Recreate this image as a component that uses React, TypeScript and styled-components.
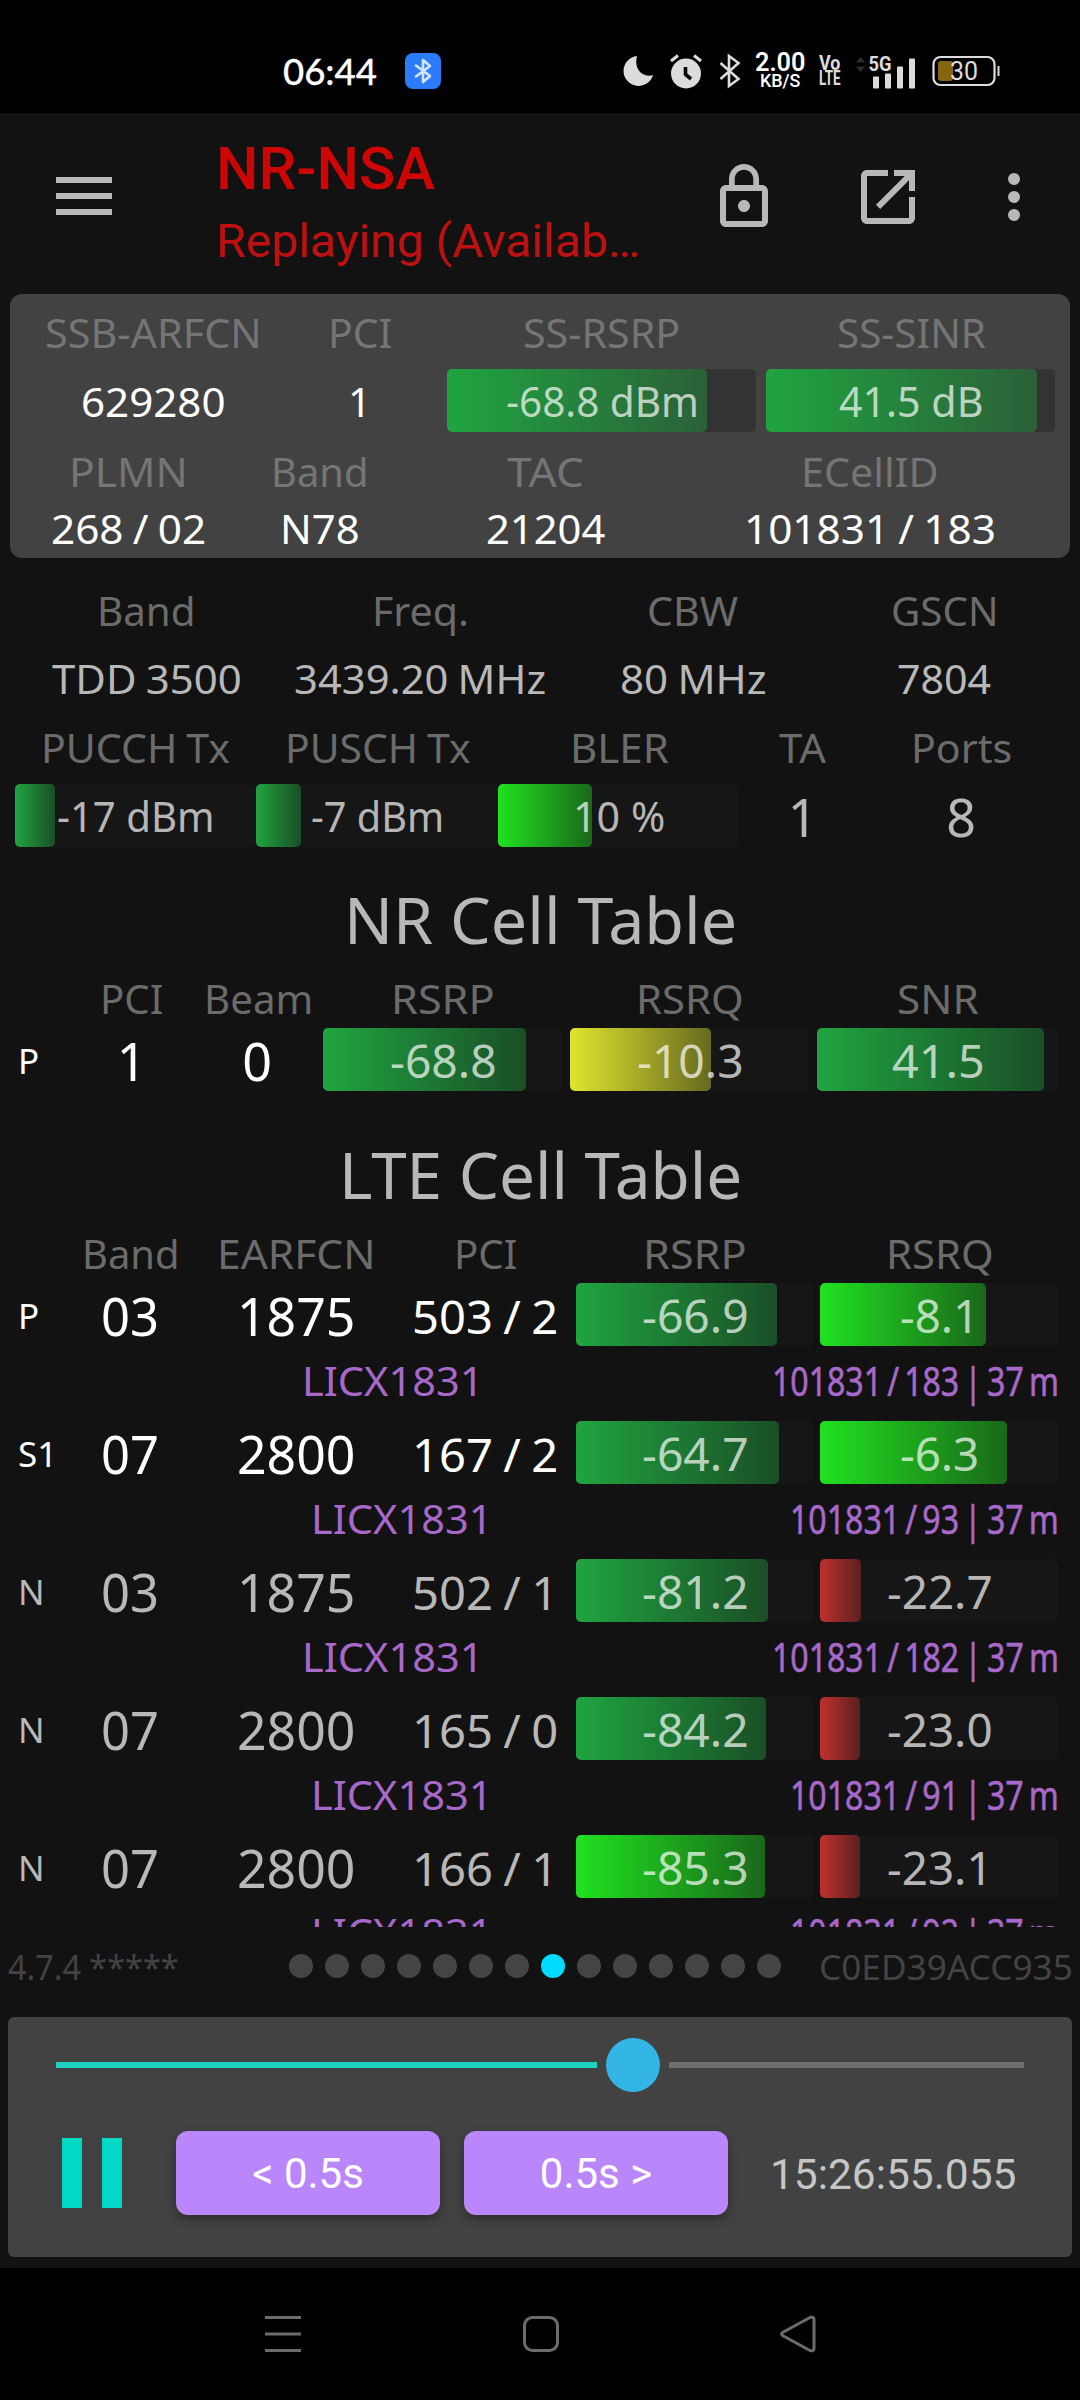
import React, { useLayoutEffect, useRef, useState } from "react";
import styled, { createGlobalStyle } from "styled-components";

const Global = createGlobalStyle`
  * { box-sizing: border-box; }
  body { margin: 0; background: #000; }
`;

const sans = `"Noto Sans", "Open Sans", sans-serif`;
const roboto = `Roboto, "Noto Sans", sans-serif`;
const dim = "rgba(255, 255, 255, 0.7)";
const bright = "#ffffff";

/* ---------- text that fills a given width ---------- */

const FitBox = styled.span<{ $w: number }>`
  display: inline-block;
  flex: none;
  width: ${(p) => p.$w}px;
  padding-left: 1.5px;
  text-align: left;
  white-space: pre;
`;
const FitInner = styled.span`
  display: inline-block;
  transform-origin: 0 50%;
`;

function Fit({ w, children }: { w: number; children: string }) {
  const ref = useRef<HTMLSpanElement>(null);
  const [scale, setScale] = useState(1);
  useLayoutEffect(() => {
    if (ref.current) setScale((w - 2.5) / ref.current.offsetWidth);
  }, [w, children]);
  return (
    <FitBox $w={w}>
      <FitInner ref={ref} style={{ transform: `scaleX(${scale})` }}>
        {children}
      </FitInner>
    </FitBox>
  );
}

/* ---------- layout ---------- */

const Screen = styled.div`
  width: 1080px;
  height: 2400px;
  display: flex;
  flex-direction: column;
  background: #121212;
  font-family: ${sans};
  overflow: hidden;
`;

const StatusBar = styled.div`
  height: 113px;
  flex: none;
  background: #000;
  padding: 28px 80px 0 281px;
  display: flex;
  align-items: center;
  color: #fff;
`;
const Clock = styled.div`
  font: 500 37.5px/44px Lato, sans-serif;
  -webkit-text-stroke: 0.3px #fff;
  margin-right: 28px;
`;
const BtBadge = styled.div`
  width: 36px;
  height: 36px;
  border-radius: 8px;
  background: #2c7bfa;
  display: flex;
  align-items: center;
  justify-content: center;
`;
const StatusIcons = styled.div`
  margin-left: auto;
  display: flex;
  align-items: center;
  height: 44px;
`;
const Stack = styled.div<{ $ml: number }>`
  margin-left: ${(p) => p.$ml}px;
  display: flex;
  flex-direction: column;
  align-items: center;
`;
const SpeedNum = styled.div`
  font: 600 25px/20px Roboto, sans-serif;
`;
const SpeedUnit = styled.div`
  font: 500 19px/16px Roboto, sans-serif;
`;
const VoText = styled.div`
  font: 700 20px/15px Roboto, sans-serif;
  color: #dcdcdc;
`;
const StatusSvg = styled.svg<{ $ml?: number }>`
  display: block;
  flex: none;
  margin-left: ${(p) => p.$ml ?? 0}px;
`;

const AppBar = styled.header`
  height: 181px;
  flex: none;
  display: flex;
  align-items: flex-start;
  padding-left: 56px;
`;
const Burger = styled.div`
  width: 56px;
  height: 38px;
  margin-top: 64px;
  display: flex;
  flex-direction: column;
  justify-content: space-between;
`;
const BurgerLine = styled.div`
  height: 6px;
  background: #b8b8b8;
`;
const Titles = styled.div`
  width: 430px;
  margin-left: 102px;
  padding-top: 23px;
  font-family: ${roboto};
  white-space: nowrap;
`;
const Title = styled.div`
  font-size: 60px;
  line-height: 66px;
  font-weight: 500;
  color: #cd0505;
`;
const Subtitle = styled.div`
  font-size: 46px;
  line-height: 60px;
  margin-top: 9px;
  color: #bd1010;
`;
const AppIcon = styled.svg<{ $ml: number }>`
  display: block;
  width: 72px;
  height: 72px;
  margin-top: 48px;
  margin-left: ${(p) => p.$ml}px;
  fill: #b8b8b8;
`;

const Body = styled.main`
  height: 1633px;
  flex: none;
  overflow: hidden;
`;
const Card = styled.section`
  margin: 0 10px 16px;
  height: 264px;
  border-radius: 12px;
  background: #424242;
`;
const Row = styled.div<{ $h: number; $pl?: number }>`
  height: ${(p) => p.$h}px;
  padding-left: ${(p) => p.$pl ?? 0}px;
  display: flex;
  align-items: center;
`;
const Cell = styled.div<{ $w: number; $ml?: number; $size?: number; $color?: string }>`
  width: ${(p) => p.$w}px;
  flex: none;
  margin-left: ${(p) => p.$ml ?? 0}px;
  padding-top: 2px;
  font-size: ${(p) => p.$size ?? 40.5}px;
  line-height: 48px;
  color: ${(p) => p.$color ?? dim};
  word-spacing: -0.04em;
  display: flex;
  justify-content: center;
  white-space: pre;
`;
const Tag = styled.div<{ $color: string }>`
  width: 70px;
  flex: none;
  padding: 2px 0 0 18px;
  font-size: 35px;
  line-height: 48px;
  color: ${(p) => p.$color};
`;
const Meter = styled.div<{ $w: number; $ml?: number; $size: number; $track: string }>`
  position: relative;
  width: ${(p) => p.$w}px;
  height: 63px;
  flex: none;
  margin-left: ${(p) => p.$ml ?? 0}px;
  border-radius: 5px;
  background: ${(p) => p.$track};
  font-size: ${(p) => p.$size}px;
  line-height: 64px;
  color: ${dim};
  display: flex;
  justify-content: center;
`;
const Fill = styled.div<{ $rgb: string }>`
  position: absolute;
  left: 0;
  top: 0;
  bottom: 0;
  border-radius: 5px;
  background: linear-gradient(90deg, rgb(${(p) => p.$rgb}), rgba(${(p) => p.$rgb}, 0.4));
`;
const MeterText = styled.div`
  position: relative;
`;
const SectionTitle = styled.h2<{ $mt: number }>`
  margin: ${(p) => p.$mt}px 0 0;
  height: 96px;
  line-height: 96px;
  font-size: 64.5px;
  font-weight: 400;
  color: #b8b8b8;
  display: flex;
  justify-content: center;
`;
const SiteRow = styled.div`
  height: 75px;
  padding: 0 21px 6px 14px;
  display: flex;
  align-items: center;
  font-size: 40.5px;
  line-height: 69px;
  color: #a769c9;
`;
const SiteName = styled.div`
  flex: 1;
  text-align: center;
`;
const SiteId = styled.div`
  word-spacing: -0.1em;
  -webkit-text-stroke: 0.6px #a769c9;
`;

const PagerRow = styled.div`
  height: 80px;
  flex: none;
  padding: 0 7px 0 6px;
  display: flex;
  align-items: center;
  justify-content: space-between;
  font-size: 34px;
  line-height: 80px;
  color: #434343;
`;
const Dots = styled.div`
  display: flex;
  gap: 12px;
  margin-left: 110px;
  margin-right: auto;
  padding-bottom: 2px;
`;
const Dot = styled.div<{ $on: boolean }>`
  width: 24px;
  height: 24px;
  border-radius: 50%;
  background: ${(p) => (p.$on ? "#00dcff" : "#444444")};
`;

const Player = styled.section`
  margin: 10px 8px 11px;
  height: 240px;
  flex: none;
  border-radius: 6px;
  background: #424242;
  padding: 21px 48px 0;
`;
const Slider = styled.div`
  display: flex;
  align-items: center;
  gap: 9px;
  height: 54px;
`;
const Track = styled.div<{ $on?: boolean }>`
  height: 6px;
  ${(p) => (p.$on ? "width: 541px; background: #1ed2c0;" : "flex: 1; background: #6e6e6e;")}
`;
const Thumb = styled.div`
  width: 54px;
  height: 54px;
  border-radius: 50%;
  background: #33b5e5;
`;
const Controls = styled.div`
  margin-top: 39px;
  height: 84px;
  display: flex;
  align-items: center;
  font-family: ${roboto};
`;
const Pause = styled.div`
  margin: 0 54px 0 6px;
  width: 60px;
  height: 70px;
  border: solid #03dac5;
  border-width: 0 20px;
`;
const StepButton = styled.button`
  width: 264px;
  height: 84px;
  padding: 2px 0 0;
  margin: 0 24px 0 0;
  border: 0;
  border-radius: 12px;
  background: #b986fb;
  box-shadow: 0 4px 9px rgba(0, 0, 0, 0.35);
  color: #fff;
  font: 400 42px/82px ${roboto};
`;
const Time = styled.div`
  margin-left: 16px;
  padding-top: 2px;
  font-size: 42px;
  color: #c6c6c6;
`;

const NavBar = styled.nav`
  flex: 1;
  background: #000;
  display: flex;
  align-items: flex-start;
  padding: 46px 0 0 263px;
  gap: 218px;
`;
const NavIcon = styled.svg`
  display: block;
  width: 40px;
  height: 40px;
  fill: none;
  stroke: #6c6c6c;
  stroke-width: 3;
`;

/* ---------- data ---------- */

const GREEN = "32, 164, 64";
const LIME = "32, 226, 32";
const YELLOW = "224, 230, 46";
const RED = "192, 48, 46";

const LABEL_CARD = "#757575";
const LABEL = "#6b6b6b";

type MeterProps = {
  w: number;
  ml?: number;
  fill: number;
  rgb: string;
  text: string;
  tw: number;
  size?: number;
  track?: string;
};

function Bar({ w, ml, fill, rgb, text, tw, size = 46, track = "#161616" }: MeterProps) {
  return (
    <Meter $w={w} $ml={ml} $size={size} $track={track}>
      <Fill $rgb={rgb} style={{ width: fill }} />
      <MeterText>
        <Fit w={tw}>{text}</Fit>
      </MeterText>
    </Meter>
  );
}

type Col = [width: number, text: string, textWidth: number, marginLeft?: number];

function Cols({ h, pl, color, size, cols }: { h: number; pl?: number; color: string; size?: number; cols: Col[] }) {
  return (
    <Row $h={h} $pl={pl}>
      {cols.map(([w, text, tw, ml], i) => (
        <Cell key={i} $w={w} $ml={ml} $size={size} $color={color}>
          <Fit w={tw}>{text}</Fit>
        </Cell>
      ))}
    </Row>
  );
}

type Lte = {
  tag: string;
  band: string;
  earfcn: string;
  pci: string;
  rsrp: string;
  rsrpFill: number;
  rsrpRgb: string;
  rsrq: string;
  rsrqW: number;
  rsrqFill: number;
  rsrqRgb: string;
  cell: string;
  cellW: number;
};

const lteRows: Lte[] = [
  { tag: "P", band: "03", earfcn: "1875", pci: "503 / 2", rsrp: "-66.9", rsrpFill: 201, rsrpRgb: GREEN, rsrq: "-8.1", rsrqW: 82, rsrqFill: 166, rsrqRgb: LIME, cell: "101831 / 183 | 37 m", cellW: 289 },
  { tag: "S1", band: "07", earfcn: "2800", pci: "167 / 2", rsrp: "-64.7", rsrpFill: 203, rsrpRgb: GREEN, rsrq: "-6.3", rsrqW: 82, rsrqFill: 187, rsrqRgb: LIME, cell: "101831 / 93 | 37 m", cellW: 271 },
  { tag: "N", band: "03", earfcn: "1875", pci: "502 / 1", rsrp: "-81.2", rsrpFill: 192, rsrpRgb: GREEN, rsrq: "-22.7", rsrqW: 108, rsrqFill: 41, rsrqRgb: RED, cell: "101831 / 182 | 37 m", cellW: 289 },
  { tag: "N", band: "07", earfcn: "2800", pci: "165 / 0", rsrp: "-84.2", rsrpFill: 190, rsrpRgb: GREEN, rsrq: "-23.0", rsrqW: 108, rsrqFill: 40, rsrqRgb: RED, cell: "101831 / 91 | 37 m", cellW: 271 },
  { tag: "N", band: "07", earfcn: "2800", pci: "166 / 1", rsrp: "-85.3", rsrpFill: 189, rsrpRgb: LIME, rsrq: "-23.1", rsrqW: 108, rsrqFill: 40, rsrqRgb: RED, cell: "101831 / 92 | 37 m", cellW: 271 },
];

/* ---------- status bar ---------- */

function Status() {
  return (
    <StatusBar>
      <Clock>
        <Fit w={96}>06:44</Fit>
      </Clock>
      <BtBadge>
        <StatusSvg width="18" height="26" viewBox="0 0 18 26" fill="none" stroke="#d5e5ff" strokeWidth="2.6" strokeLinejoin="round" strokeLinecap="round">
          <path d="M2 7.5 16 18 9 24V2l7 6L2 18.5" />
        </StatusSvg>
      </BtBadge>
      <StatusIcons>
        <StatusSvg width="32" height="32" viewBox="0 0 32 32" fill="#dcdcdc">
          <path d="M15 1A15 15 0 1 0 31 20C23 23 11 16 15 1Z" />
        </StatusSvg>
        <StatusSvg $ml={15} width="34" height="36" viewBox="0 0 34 36">
          <circle cx="17" cy="20.500" r="15" fill="#dcdcdc" />
          <path d="M2 8 9 2.500M32 8 25 2.500" stroke="#dcdcdc" strokeWidth="3" />
          <path d="M16.500 14v7.500l5.500 4.500" fill="none" stroke="#000" strokeWidth="3.600" />
        </StatusSvg>
        <StatusSvg $ml={16} width="22" height="36" viewBox="0 0 22 36" fill="none" stroke="#dcdcdc" strokeWidth="2.600">
          <path d="M1.500 10 19.500 26 10 33V3l9.500 7L1.500 26" />
        </StatusSvg>
        <Stack $ml={12}>
          <SpeedNum>
            <Fit w={53}>2.00</Fit>
          </SpeedNum>
          <SpeedUnit>
            <Fit w={43}>KB/S</Fit>
          </SpeedUnit>
        </Stack>
        <Stack $ml={11}>
          <VoText>
            <Fit w={24}>Vo</Fit>
          </VoText>
          <VoText>
            <Fit w={24}>LTE</Fit>
          </VoText>
        </Stack>
        <StatusSvg $ml={15} width="60" height="36" viewBox="0 0 60 36" fill="#dcdcdc">
          <path d="M0 9.500 4.500 4 9 9.500ZM0 13.500 4.500 19 9 13.500Z" fill="#2e2e2e" />
          <text x="12.500" y="18" fontFamily="Roboto" fontWeight="700" fontSize="20" textLength="23" lengthAdjust="spacingAndGlyphs">
            5G
          </text>
          <rect x="17" y="23.500" width="6" height="12" rx="1" />
          <rect x="29" y="20.500" width="6" height="15" rx="1" />
          <rect x="41" y="13.500" width="6" height="22" rx="1" />
          <rect x="53" y="5.500" width="6" height="30" rx="1" />
        </StatusSvg>
        <StatusSvg $ml={16} width="68" height="32" viewBox="0 0 68 32">
          <rect x="6" y="6" width="15" height="20" rx="3" fill="#87640f" />
          <rect x="1.500" y="2" width="61" height="28" rx="7" fill="none" stroke="#dcdcdc" strokeWidth="2.200" />
          <path d="M66.500 11v10" stroke="#dcdcdc" strokeWidth="2" />
          <text x="18" y="24.500" fill="#dcdcdc" fontFamily="Roboto" fontSize="25" textLength="28" lengthAdjust="spacingAndGlyphs">
            30
          </text>
        </StatusSvg>
      </StatusIcons>
    </StatusBar>
  );
}

/* ---------- app ---------- */

export default function App() {
  return (
    <Screen>
      <Global />
      <Status />
      <AppBar>
        <Burger>
          <BurgerLine />
          <BurgerLine />
          <BurgerLine />
        </Burger>
        <Titles>
          <Title>
            <Fit w={221}>NR-NSA</Fit>
          </Title>
          <Subtitle>
            <Fit w={427}>Replaying (Availab…</Fit>
          </Subtitle>
        </Titles>
        <AppIcon $ml={64} viewBox="0 0 24 24">
          <path d="M12 17c1.100 0 2-.9 2-2s-.9-2-2-2-2 .9-2 2 .9 2 2 2zm6-9h-1V6c0-2.760-2.240-5-5-5S7 3.240 7 6v2H6c-1.100 0-2 .9-2 2v10c0 1.100.9 2 2 2h12c1.100 0 2-.9 2-2V10c0-1.100-.9-2-2-2zM8.900 6c0-1.710 1.390-3.100 3.100-3.100s3.100 1.390 3.100 3.100v2H8.900V6zM18 20H6V10h12v10z" />
        </AppIcon>
        <AppIcon $ml={72} viewBox="0 0 24 24">
          <path d="M12 3v2H5v14h14v-7h2v7c0 1.100-.9 2-2 2H5c-1.110 0-2-.9-2-2V5c0-1.100.89-2 2-2zM14 3v2h3.590l-9.600 9.600 1.410 1.410L19 6.410V10h2V3z" />
        </AppIcon>
        <AppIcon $ml={54} viewBox="0 0 24 24">
          <circle cx="12" cy="6" r="2" />
          <circle cx="12" cy="12" r="2" />
          <circle cx="12" cy="18" r="2" />
        </AppIcon>
      </AppBar>

      <Body>
        <Card>
          <Cols h={75} color={LABEL_CARD} cols={[[285, "SSB-ARFCN", 219], [129, "PCI", 67], [309, "SS-RSRP", 160, 23], [289, "SS-SINR", 151, 10]]} />
          <Row $h={63}>
            <Cell $w={285} $color={bright}>
              <Fit w={147}>629280</Fit>
            </Cell>
            <Cell $w={129} $color={bright}>
              1
            </Cell>
            <Bar w={309} ml={23} fill={260} rgb={GREEN} text="-68.8 dBm" tw={195} size={41} track="#333333" />
            <Bar w={289} ml={10} fill={271} rgb={GREEN} text="41.5 dB" tw={147} size={41} track="#333333" />
          </Row>
          <Cols h={78} color={LABEL_CARD} cols={[[236, "PLMN", 121], [146, "Band", 100], [306, "TAC", 79], [343, "ECellID", 140]]} />
          <Cols h={35} color={bright} cols={[[236, "268 / 02", 158], [146, "N78", 82], [306, "21204", 122], [343, "101831 / 183", 254]]} />
        </Card>

        <Cols h={71} color={LABEL} cols={[[292, "Band", 101], [256, "Freq.", 100], [289, "CBW", 94], [214, "GSCN", 110]]} />
        <Cols h={65} color="#b8b8b8" cols={[[292, "TDD 3500", 192], [256, "3439.20 MHz", 255], [289, "80 MHz", 149], [214, "7804", 97]]} />
        <Cols h={74} pl={15} color={LABEL} cols={[[241, "PUCCH Tx", 192], [242, "PUSCH Tx", 188], [241, "BLER", 101], [127, "TA", 50], [190, "Ports", 104]]} />
        <Row $h={63} $pl={15}>
          <Bar w={241} fill={40} rgb={GREEN} text="-17 dBm" tw={160} size={41} />
          <Bar w={242} fill={45} rgb={GREEN} text="-7 dBm" tw={136} size={41} />
          <Bar w={241} fill={94} rgb={LIME} text="10 %" tw={95} size={41} />
          <Cell $w={127} $size={52}>
            1
          </Cell>
          <Cell $w={190} $size={52}>
            8
          </Cell>
        </Row>

        <SectionTitle $mt={24}>
          <Fit w={396}>NR Cell Table</Fit>
        </SectionTitle>
        <Cols h={61} pl={70} color={LABEL} cols={[[123, "PCI", 66], [130, "Beam", 112], [239, "RSRP", 106], [239, "RSRQ", 110, 8], [241, "SNR", 84, 8]]} />
        <Row $h={63}>
          <Tag $color={bright}>P</Tag>
          <Cell $w={123} $size={52} $color={bright}>
            1
          </Cell>
          <Cell $w={128} $size={52} $color={bright}>
            0
          </Cell>
          <Bar w={239} ml={2} fill={203} rgb={GREEN} text="-68.8" tw={109} />
          <Bar w={239} ml={8} fill={141} rgb={YELLOW} text="-10.3" tw={109} />
          <Bar w={241} ml={8} fill={227} rgb={GREEN} text="41.5" tw={95} />
        </Row>

        <SectionTitle $mt={35}>
          <Fit w={406}>LTE Cell Table</Fit>
        </SectionTitle>
        <Cols h={61} pl={70} color={LABEL} cols={[[120, "Band", 100], [212, "EARFCN", 161], [166, "PCI", 66], [237, "RSRP", 106, 8], [238, "RSRQ", 110, 7]]} />
        {lteRows.map((r, i) => {
          const color = r.tag === "N" ? "#b8b8b8" : bright;
          return (
            <React.Fragment key={i}>
              <Row $h={63}>
                <Tag $color={color}>{r.tag}</Tag>
                <Cell $w={120} $size={52} $color={color}>
                  <Fit w={61}>{r.band}</Fit>
                </Cell>
                <Cell $w={212} $size={52} $color={color}>
                  <Fit w={121}>{r.earfcn}</Fit>
                </Cell>
                <Cell $w={166} $size={46} $color={color}>
                  <Fit w={149}>{r.pci}</Fit>
                </Cell>
                <Bar w={237} ml={8} fill={r.rsrpFill} rgb={r.rsrpRgb} text={r.rsrp} tw={109} />
                <Bar w={238} ml={7} fill={r.rsrqFill} rgb={r.rsrqRgb} text={r.rsrq} tw={r.rsrqW} />
              </Row>
              <SiteRow>
                <SiteName>
                  <Fit w={184}>LICX1831</Fit>
                </SiteName>
                <SiteId>
                  <Fit w={r.cellW}>{r.cell}</Fit>
                </SiteId>
              </SiteRow>
            </React.Fragment>
          );
        })}
      </Body>

      <PagerRow>
        <Fit w={173}>4.7.4 *****</Fit>
        <Dots>
          {Array.from({ length: 14 }, (_, i) => (
            <Dot key={i} $on={i === 7} />
          ))}
        </Dots>
        <Fit w={256}>C0ED39ACC935</Fit>
      </PagerRow>

      <Player>
        <Slider>
          <Track $on />
          <Thumb />
          <Track />
        </Slider>
        <Controls>
          <Pause />
          <StepButton>&lt; 0.5s</StepButton>
          <StepButton>0.5s &gt;</StepButton>
          <Time>
            <Fit w={249}>15:26:55.055</Fit>
          </Time>
        </Controls>
      </Player>

      <NavBar>
        <NavIcon viewBox="0 0 40 40">
          <path d="M2 3.500h36M2 20h36M2 36.500h36" />
        </NavIcon>
        <NavIcon viewBox="0 0 40 40" strokeWidth="2.500">
          <rect x="3.500" y="3.500" width="33" height="33" rx="8" />
        </NavIcon>
        <NavIcon viewBox="0 0 40 40" strokeWidth="2.500" strokeLinejoin="round">
          <path d="M3.500 21.500Q2 20 3.500 18.500L31 3.500Q34.500 2.500 35 5V35Q34.500 37.500 31 36.500Z" />
        </NavIcon>
      </NavBar>
    </Screen>
  );
}
